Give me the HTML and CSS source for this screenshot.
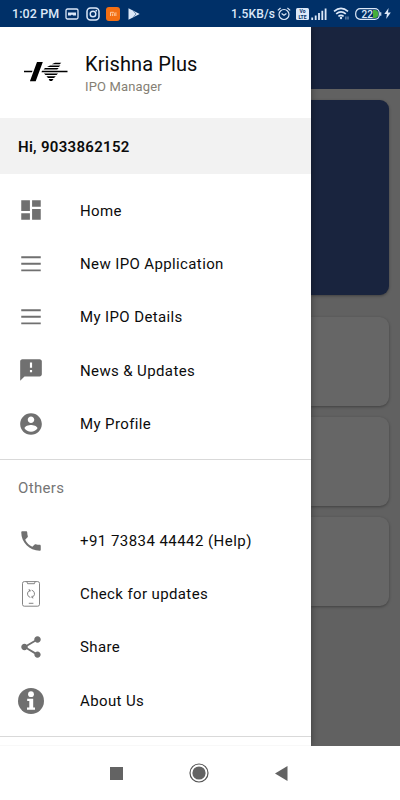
FILE: index.html
```html
<!DOCTYPE html>
<html lang="en">
<head>
	<meta charset="utf-8">
	<meta name="viewport" content="width=device-width, initial-scale=1">
	<title>Krishna Plus - IPO Manager</title>
	<link rel="stylesheet" href="styles.css">
</head>
<body>
	<div class="statusBar">
		<span class="time">1:02 PM</span>
		<svg class="cardIcon" width="14" height="12" viewBox="0 0 14 12"><rect x="1" y="1" width="12" height="10" rx="1.5" fill="none" stroke="#dce8f8" stroke-width="1.3"/><path d="M3 4.600h8v3H8.200l-1.200-1-1.200 1H3z" fill="#dce8f8"/></svg>
		<svg class="instaIcon" width="14" height="14" viewBox="0 0 14 14"><rect x="1" y="1" width="12" height="12" rx="3.500" fill="none" stroke="#dce8f8" stroke-width="1.500"/><circle cx="7" cy="7" r="2.800" fill="none" stroke="#dce8f8" stroke-width="1.400"/><circle cx="10.300" cy="3.700" r=".9" fill="#dce8f8"/></svg>
		<svg class="miIcon" width="14" height="14" viewBox="0 0 14 14"><rect width="14" height="14" rx="3" fill="#f36f13"/><path d="M4.500 9V5.300h2.800q1 0 1 1V9M6.400 6.500V9M9.900 5.300V9" fill="none" stroke="#ffd3ae" stroke-width=".9"/></svg>
		<svg class="playIcon" width="12" height="12" viewBox="0 0 12 12"><path d="M.5.3 11.700 6 .5 11.700z" fill="#dce8f8"/><path d="M5.500 3.200 8 6 5.500 8.800" fill="none" stroke="#003068" stroke-width=".5"/></svg>
		<div class="statusRight">
			<span class="speed">1.5KB/s</span>
			<svg class="alarmIcon" width="14" height="14" viewBox="0 0 14 14"><g fill="none" stroke="#dce8f8" stroke-width="1.200"><circle cx="7" cy="7.500" r="5"/><path d="M.8 3.400 3.600 1M13.200 3.400 10.400 1M4.600 6.600 7 8.300l2.400-1.700"/></g></svg>
			<svg class="volteIcon" width="13" height="12" viewBox="0 0 13 12"><rect width="13" height="12" rx="1.500" fill="#dce8f8"/><text x="6.500" y="5" text-anchor="middle">Vo</text><text x="6.500" y="11.100" text-anchor="middle">LTE</text></svg>
			<svg class="signalIcon" width="16" height="12" viewBox="0 0 16 12"><path d="M1.200 9.500V12M4.700 7.500V12M8 5V12M11.300 2.800V12M14.600.5V12" stroke="#dce8f8" stroke-width="1.800"/></svg>
			<svg class="wifiIcon" width="17" height="13" viewBox="0 0 17 13"><g fill="none" stroke="#dce8f8" stroke-width="1.700"><path d="M1 4.300Q8 -1.700 15 4.300M3.200 6.900Q8 2.900 12.800 6.900M5.400 9.300Q8 7.300 10.600 9.300"/></g><circle cx="8" cy="11" r="1.200" fill="#dce8f8"/><path d="M12.900 9.500v3M15 9.500v3" stroke="#9db4d1" stroke-width=".9"/></svg>
			<svg class="batteryIcon" width="27" height="12" viewBox="0 0 27 12"><rect x=".7" y=".7" width="23.600" height="10.600" rx="4.500" fill="none" stroke="#dce8f8" stroke-width="1.200"/><path d="M18 2h2q3.300 0 3.300 4t-3.300 4h-2z" fill="#45ad3a"/><path d="M25.700 4.300v3.400" stroke="#dce8f8" stroke-width="1.200"/><text x="6.500" y="9.600">22</text></svg>
			<svg class="boltIcon" width="7" height="11" viewBox="0 0 7 11"><path d="M4.600 0 .3 6h2.600L2.200 11 6.800 4.500H4z" fill="#dce8f8"/></svg>
		</div>
	</div>

	<div class="screen">
		<div class="drawer">
			<div class="brand">
				<svg class="logo" width="44" height="20" viewBox="0 0 44 20">
					<path d="M0 8.700h8.500l-.5 1.500H0zM13 0h5.800L11.700 19.300H5.900zM17.500 10.200l.5-1.500h25.500v1.500z"/>
					<path d="M31 .8h6.300l-1.600 1.500h-8zM26 3.400h10.400l-1.600 1.500H23zM21 6h13.700l-1.500 1.500H19.500zM20 11.500h14l-1.500 1.500H21.500zM22.500 14.200h9.300L30 16h-6zM24.700 17.100h4.800L28 18.900h-2.200z"/>
				</svg>
				<div class="brandText">
					<div class="appName">Krishna Plus</div>
					<div class="appSub">IPO Manager</div>
				</div>
			</div>
			<div class="user">Hi, 9033862152</div>
			<div class="menu">
				<div class="item">
					<svg class="icon homeIcon" viewBox="0 0 24 24"><path d="M3 13h8V3H3v10zm0 8h8v-6H3v6zm10 0h8V11h-8v10zm0-18v6h8V3h-8z"/></svg>
					<span>Home</span>
				</div>
				<div class="item">
					<svg class="icon" viewBox="0 0 24 24"><path d="M3 4.800h18v1.800H3zM3 10.900h18v1.800H3zM3 17h18v1.800H3z"/></svg>
					<span>New IPO Application</span>
				</div>
				<div class="item">
					<svg class="icon" viewBox="0 0 24 24"><path d="M3 4.800h18v1.800H3zM3 10.900h18v1.800H3zM3 17h18v1.800H3z"/></svg>
					<span>My IPO Details</span>
				</div>
				<div class="item">
					<svg class="icon newsIcon" viewBox="0 0 24 24"><path d="M20 2H4c-1.100 0-1.990.9-1.990 2L2 22l4-4h14c1.100 0 2-.9 2-2V4c0-1.100-.9-2-2-2zm-7 12h-2v-2h2v2zm0-4h-2V5h2v5z"/></svg>
					<span>News &amp; Updates</span>
				</div>
				<div class="item">
					<svg class="icon" viewBox="0 0 24 24"><path d="M12 2C6.480 2 2 6.480 2 12s4.480 10 10 10 10-4.480 10-10S17.520 2 12 2zm0 3c1.660 0 3 1.340 3 3s-1.340 3-3 3-3-1.340-3-3 1.340-3 3-3zm0 14.200c-2.500 0-4.710-1.280-6-3.220.03-1.990 4-3.080 6-3.080 1.990 0 5.970 1.090 6 3.080-1.290 1.940-3.500 3.220-6 3.220z"/></svg>
					<span>My Profile</span>
				</div>
			</div>
			<div class="others">Others</div>
			<div class="menu menuOthers">
				<div class="item">
					<svg class="icon" viewBox="0 0 24 24"><path d="M6.620 10.790c1.440 2.830 3.760 5.140 6.590 6.590l2.200-2.200c.27-.27.67-.36 1.020-.24 1.120.37 2.330.57 3.570.57.55 0 1 .45 1 1V20c0 .55-.45 1-1 1-9.390 0-17-7.610-17-17 0-.55.45-1 1-1h3.500c.55 0 1 .45 1 1 0 1.250.2 2.450.57 3.570.11.35.03.74-.25 1.020l-2.200 2.200z"/></svg>
					<span class="phone">+91 73834 44442 (Help)</span>
				</div>
				<div class="item">
					<svg class="icon" viewBox="0 0 26 26"><g fill="none" stroke="#777" stroke-width=".9"><rect x="4.500" y=".6" width="17" height="24.600" rx="1.800"/><path d="M8.800.600 9.600 2.700h6.800l.8-2.100M10.800 22.300h4.600"/><path d="M12.300 16.400A3.700 3.700 0 0 1 10.500 10.300L12 9.200M13.700 9.200A3.700 3.700 0 0 1 15.500 15.300L14 16.400M10.700 8.600l1.500.5-.4 1.700M15.300 17l-1.500-.5.4-1.700"/></g></svg>
					<span>Check for updates</span>
				</div>
				<div class="item">
					<svg class="icon" viewBox="0 0 24 24"><path d="M18 16.080c-.76 0-1.440.3-1.960.77L8.910 12.700c.05-.23.09-.46.09-.7s-.04-.47-.09-.7l7.050-4.110c.54.5 1.250.81 2.040.81 1.660 0 3-1.340 3-3s-1.340-3-3-3-3 1.340-3 3c0 .24.04.47.09.7L8.040 9.810C7.500 9.310 6.790 9 6 9c-1.660 0-3 1.340-3 3s1.340 3 3 3c.79 0 1.500-.31 2.040-.81l7.120 4.160c-.05.21-.08.43-.08.65 0 1.610 1.310 2.920 2.920 2.920 1.610 0 2.920-1.310 2.920-2.920s-1.310-2.920-2.920-2.920z"/></svg>
					<span>Share</span>
				</div>
				<div class="item">
					<svg class="icon" viewBox="0 0 26 26"><circle cx="13" cy="13" r="13"/><circle cx="13" cy="6.200" r="2.900" fill="#fff"/><path d="M9.200 10.700h6v8.800h1.800v2.200H9v-2.200h2.300v-6.600H9.200z" fill="#fff"/></svg>
					<span>About Us</span>
				</div>
			</div>
			<div class="drawerEnd"></div>
		</div>

		<div class="page">
			<div class="toolbar"></div>
			<div class="banner"></div>
			<div class="card"></div>
			<div class="card"></div>
			<div class="card"></div>
		</div>
	</div>

	<div class="navBar">
		<svg width="13" height="13" viewBox="0 0 13 13"><rect width="13" height="13" fill="#636363"/></svg>
		<svg width="20" height="20" viewBox="0 0 20 20"><circle cx="10" cy="10" r="9" fill="none" stroke="#555" stroke-width="1.200"/><circle cx="10" cy="10" r="6.600" fill="#636363"/></svg>
		<svg width="13" height="15" viewBox="0 0 13 15"><path d="M0 7.500 12.500 0v15z" fill="#636363"/></svg>
	</div>
</body>
</html>
```

FILE: styles.css
```css
* {
	box-sizing: border-box;
}
body {
	margin: 0;
	width: 400px;
	height: 800px;
	overflow: hidden;
	background: #fff;
	font-family: Roboto, "Liberation Sans", sans-serif;
	color: #0c0c0c;
}
svg {
	display: block;
	flex: none;
}

/* status bar */
.statusBar {
	display: flex;
	align-items: center;
	height: 27px;
	padding: 0 9px 0 12px;
	background: #003068;
	color: #dce8f8;
	font-size: 12.5px;
	font-weight: 500;
	white-space: nowrap;
}
.time {
	width: 53px;
	letter-spacing: 0.1px;
}
.instaIcon {
	margin-left: 7px;
}
.miIcon {
	margin-left: 6px;
}
.playIcon {
	margin-left: 8px;
}
.statusRight {
	display: flex;
	align-items: center;
	margin-left: auto;
}
.speed {
	width: 46px;
	font-size: 12px;
	letter-spacing: 0.15px;
}
.volteIcon {
	margin-left: 5px;
}
.volteIcon text {
	font-size: 5px;
	font-weight: 700;
	fill: #003068;
}
.signalIcon {
	margin-left: 2px;
}
.wifiIcon {
	margin-left: 6px;
}
.batteryIcon {
	margin-left: 5px;
}
.batteryIcon text {
	font-size: 10px;
	font-weight: 500;
	fill: #dce8f8;
}
.boltIcon {
	margin-left: 2px;
}

.screen {
	display: flex;
	height: 719px;
	overflow: hidden;
	background: #616161;
}

/* drawer */
.drawer {
	width: 311px;
	height: 719px;
	background: #fff;
	box-shadow: 0 0 7px rgba(0, 0, 0, 0.4);
	z-index: 1;
}
.brand {
	display: flex;
	height: 91px;
	padding: 35px 0 0 24px;
}
.brandText {
	margin: -11px 0 0 17px;
}
.appName {
	font-size: 20px;
	line-height: 26px;
	letter-spacing: 0.1px;
}
.appSub {
	margin-top: 2px;
	font-size: 13px;
	line-height: 16px;
	letter-spacing: 0.15px;
	color: #857f74;
}
.user {
	height: 56px;
	padding-left: 18px;
	line-height: 58px;
	background: #f2f2f2;
	font-size: 15px;
	font-weight: 600;
	letter-spacing: 0.3px;
}
.menu {
	padding: 10px 0 8.4px;
	border-bottom: 1px solid #d9d9d9;
}
.item {
	display: flex;
	align-items: center;
	gap: 36px;
	height: 53.33px;
	padding-left: 18px;
	font-size: 15px;
	font-weight: 400;
	letter-spacing: 0.38px;
}
.phone {
	letter-spacing: 0.45px;
}
.icon {
	width: 26px;
	height: 26px;
	fill: #707070;
}
.homeIcon,
.newsIcon {
	margin-bottom: 2px;
}
.others {
	height: 54px;
	padding-left: 18px;
	line-height: 56px;
	font-size: 15px;
	letter-spacing: 0.35px;
	color: #757575;
}
.menuOthers {
	padding-top: 0;
}
.drawerEnd {
	height: 10px;
	border-bottom: 2px solid #f8f8f8;
}

/* dimmed page behind the drawer */
.page {
	flex: 1;
}
.toolbar {
	height: 62px;
	background: #19243e;
}
.banner {
	height: 195px;
	margin: 11px 11px 22px 0;
	border-radius: 0 9px 9px 0;
	background: #19243e;
	box-shadow: 0 1px 3px rgba(0, 0, 0, 0.35);
}
.card {
	height: 89px;
	margin: 0 11px 11px 0;
	border-radius: 0 9px 9px 0;
	background: #666;
	box-shadow: 0 1px 3px rgba(0, 0, 0, 0.35);
}

/* android buttons */
.navBar {
	display: flex;
	align-items: center;
	justify-content: space-between;
	height: 54px;
	padding: 0 112px 0 110px;
	background: #fff;
}
```
